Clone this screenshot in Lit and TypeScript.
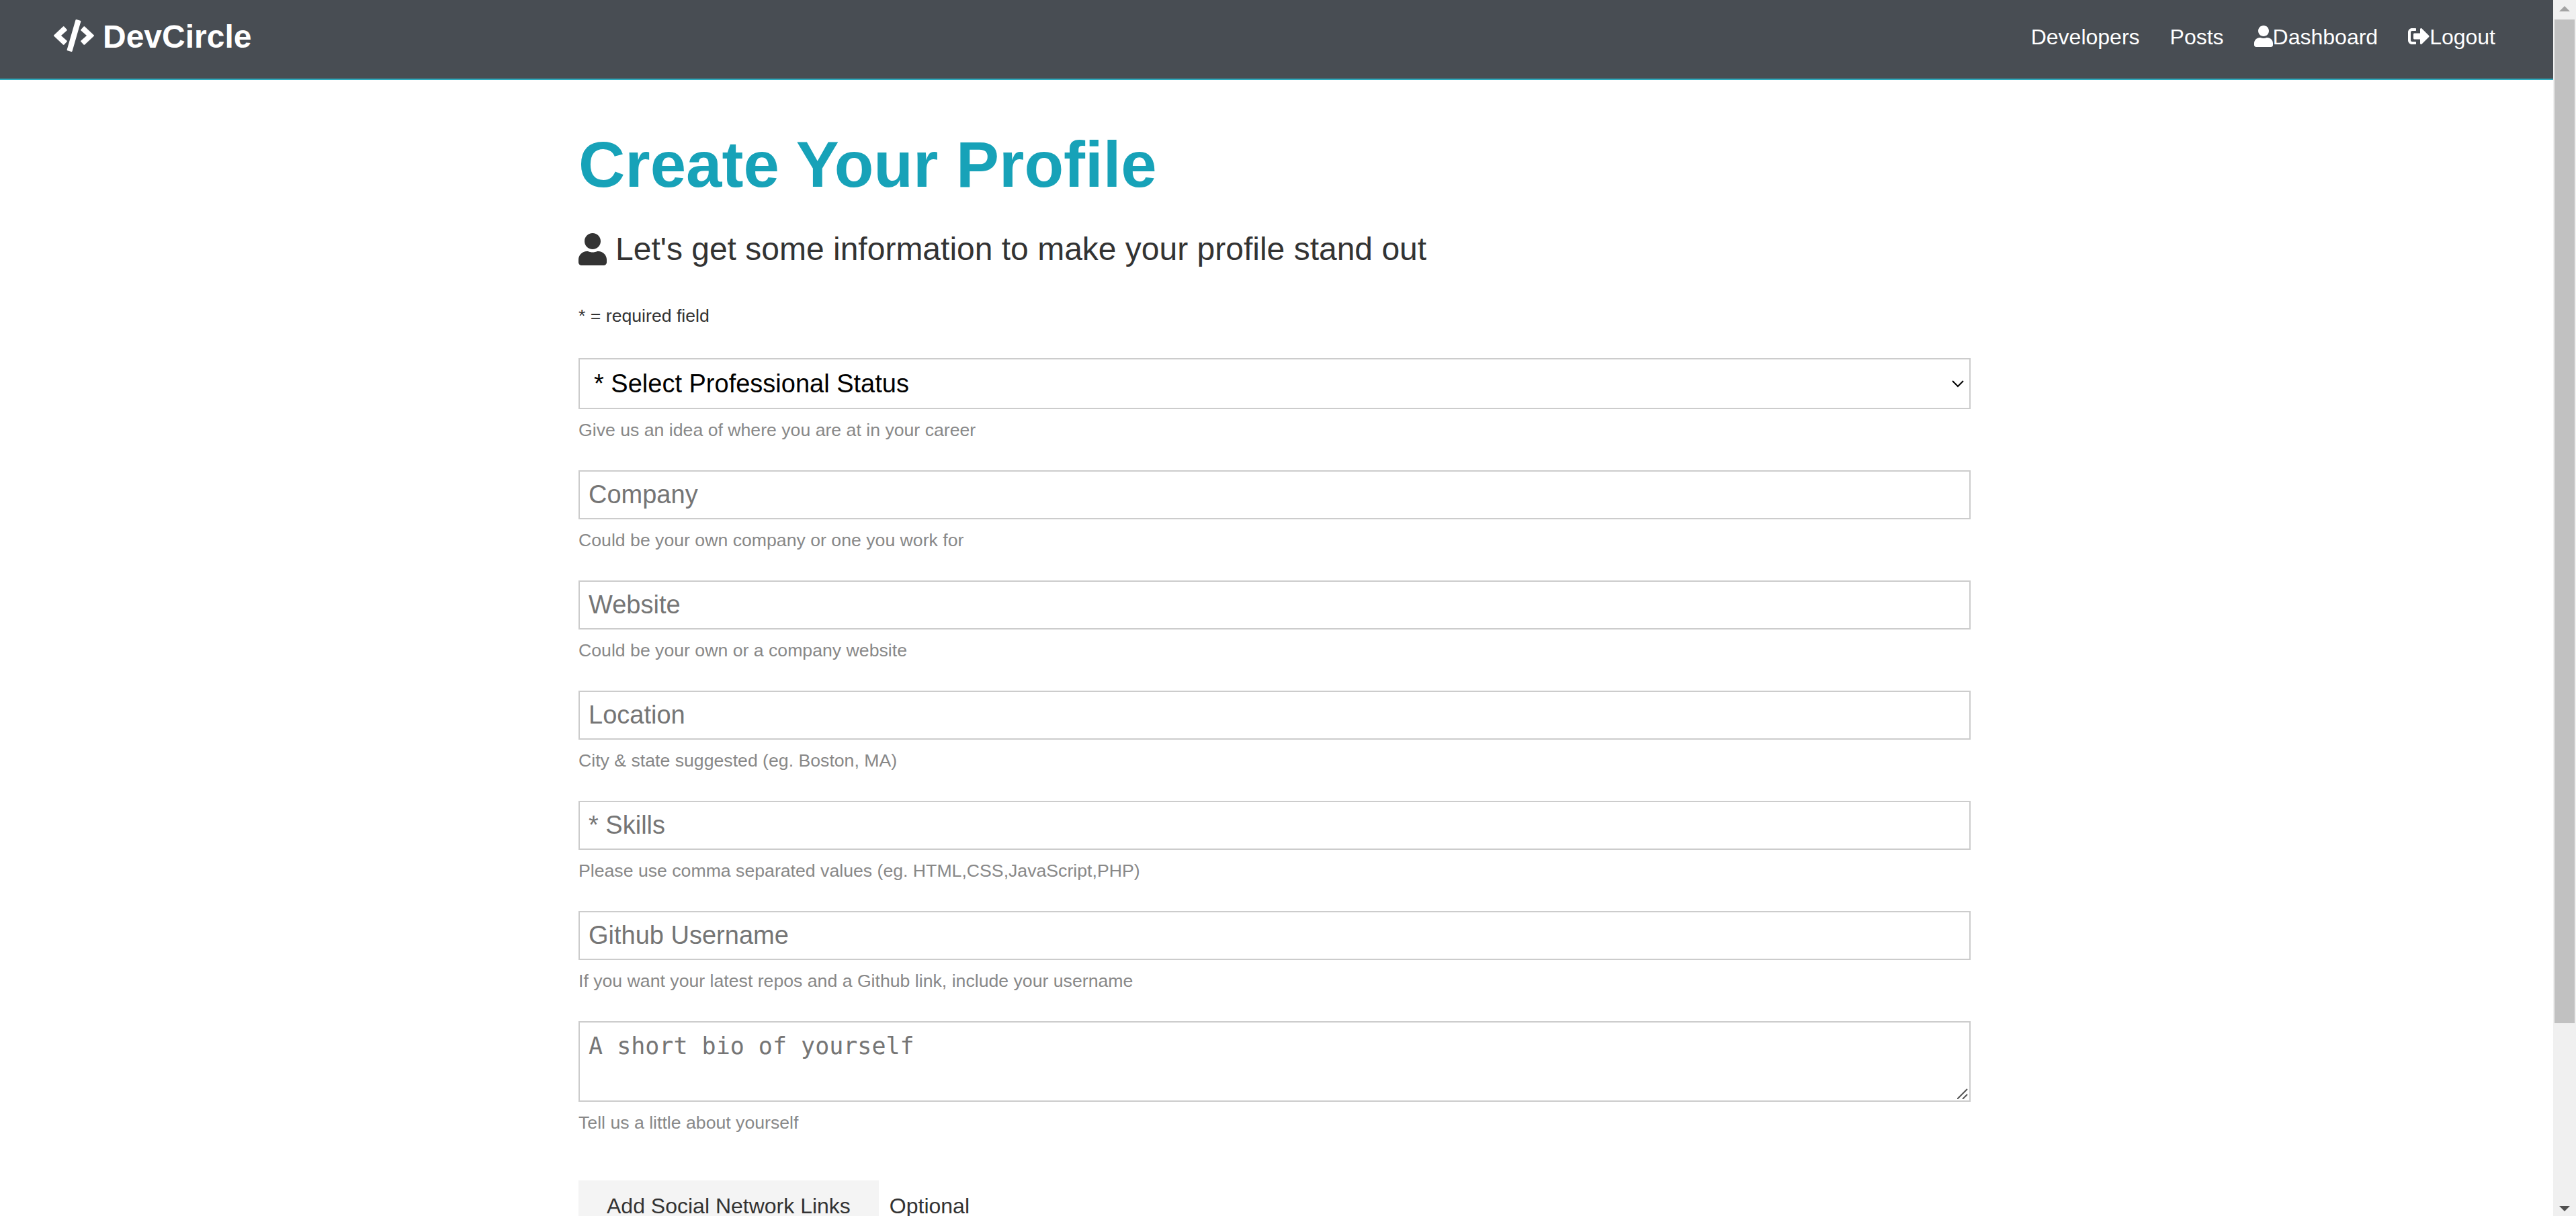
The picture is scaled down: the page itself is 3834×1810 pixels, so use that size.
import { LitElement, html, css, svg } from "lit";
import { customElement } from "lit/decorators.js";

interface Field {
  id: string;
  placeholder: string;
  hint: string;
}

const FIELDS: Field[] = [
  { id: "company", placeholder: "Company", hint: "Could be your own company or one you work for" },
  { id: "website", placeholder: "Website", hint: "Could be your own or a company website" },
  { id: "location", placeholder: "Location", hint: "City & state suggested (eg. Boston, MA)" },
  { id: "skills", placeholder: "* Skills", hint: "Please use comma separated values (eg. HTML,CSS,JavaScript,PHP)" },
  {
    id: "github",
    placeholder: "Github Username",
    hint: "If you want your latest repos and a Github link, include your username",
  },
];

const userPath = svg`<path d="M224 256c70.7 0 128-57.3 128-128S294.7 0 224 0 96 57.3 96 128s57.3 128 128 128zm89.6 32h-16.7c-22.2 10.2-46.9 16-72.9 16s-50.6-5.8-72.9-16h-16.7C60.2 288 0 348.2 0 422.4V464c0 26.5 21.5 48 48 48h352c26.5 0 48-21.5 48-48v-41.6c0-74.2-60.2-134.4-134.4-134.4z"/>`;

@customElement("dev-navbar")
export class DevNavbar extends LitElement {
  static styles = css`
    :host {
      display: block;
    }
    .bar {
      display: flex;
      justify-content: space-between;
      align-items: flex-start;
      box-sizing: border-box;
      height: 119px;
      padding: 16px 72px 0 80px;
      background: #484d53;
      border-bottom: 2px solid #2eabbf;
    }
    a {
      color: #fff;
      text-decoration: none;
    }
    .brand {
      margin: 0;
      font-size: 48px;
      line-height: 77px;
      font-weight: bold;
    }
    .brand a {
      display: flex;
      align-items: center;
      gap: 13px;
    }
    .links {
      display: flex;
      gap: 17px;
      margin: 0;
      padding: 14px 0 0;
      list-style: none;
      font-size: 32px;
      line-height: 51px;
    }
    .links a {
      display: flex;
      align-items: center;
      padding: 0 14px;
    }
    svg {
      display: block;
      margin-bottom: 3px;
      fill: #fff;
    }
    .code {
      width: 60px;
      height: 48px;
    }
    .user {
      width: 28px;
      height: 32px;
    }
    .out {
      width: 32px;
      height: 32px;
    }
  `;

  render() {
    return html`
      <nav class="bar">
        <h1 class="brand">
          <a href="#home">
            <svg class="code" viewBox="0 0 640 512" aria-hidden="true">
              <path
                d="M278.9 511.5l-61-17.7c-6.4-1.8-10-8.500-8.200-14.900L346.200 8.700c1.800-6.400 8.500-10 14.900-8.200l61 17.700c6.400 1.800 10 8.500 8.200 14.900L293.800 503.300c-1.900 6.400-8.500 10.100-14.900 8.200zm-114-112.200l43.500-46.400c4.600-4.900 4.300-12.700-.8-17.200L117 256l90.600-79.700c5.100-4.500 5.500-12.300.8-17.200l-43.500-46.400c-4.500-4.800-12.100-5.100-17-.5L3.800 247.200c-5.100 4.700-5.100 12.800 0 17.500l144.100 135.100c4.900 4.600 12.500 4.400 17-.5zm327.200.6l144.100-135.100c5.100-4.700 5.100-12.800 0-17.500L492.100 112.100c-4.800-4.500-12.400-4.300-17 .5L431.600 159c-4.600 4.900-4.300 12.700.8 17.200L523 256l-90.600 79.700c-5.100 4.500-5.500 12.300-.8 17.200l43.500 46.400c4.500 4.900 12.100 5.100 17 .6z"
              />
            </svg>
            <span>DevCircle</span>
          </a>
        </h1>
        <ul class="links">
          <li><a href="#developers">Developers</a></li>
          <li><a href="#posts">Posts</a></li>
          <li>
            <a href="#dashboard"
              ><svg class="user" viewBox="0 0 448 512" aria-hidden="true">${userPath}</svg
              ><span>Dashboard</span></a
            >
          </li>
          <li>
            <a href="#logout"
              ><svg class="out" viewBox="0 0 512 512" aria-hidden="true">
                <path
                  d="M497 273L329 441c-15 15-41 4.5-41-17v-96H152c-13.3 0-24-10.7-24-24v-96c0-13.3 10.7-24 24-24h136V88c0-21.4 25.9-32 41-17l168 168c9.3 9.4 9.3 24.6 0 34zM192 436v-40c0-6.6-5.4-12-12-12H96c-17.7 0-32-14.3-32-32V160c0-17.7 14.3-32 32-32h84c6.6 0 12-5.4 12-12V76c0-6.600-5.400-12-12-12H96c-53 0-96 43-96 96v192c0 53 43 96 96 96h84c6.600 0 12-5.400 12-12z"
                /></svg
              ><span>Logout</span></a
            >
          </li>
        </ul>
      </nav>
    `;
  }
}

@customElement("profile-form")
export class ProfileForm extends LitElement {
  static styles = css`
    :host {
      display: block;
      box-sizing: border-box;
      max-width: 2200px;
      margin: 0 auto;
      padding: 68px 64px;
      font-size: 32px;
    }
    .title {
      margin: 0 0 30px;
      font-size: 96px;
      line-height: 115px;
      font-weight: bold;
      color: #17a2b8;
    }
    .lead {
      display: flex;
      align-items: center;
      gap: 13px;
      margin: 0 0 36px;
      font-size: 48px;
      line-height: 77px;
    }
    .lead svg {
      width: 42px;
      height: 48px;
      fill: #333;
    }
    .required {
      margin: 0 0 37px;
      font-size: smaller;
      line-height: 51px;
    }
    .form {
      display: flex;
      flex-direction: column;
      gap: 38px;
    }
    .group {
      display: flex;
      flex-direction: column;
      gap: 10px;
    }
    .control {
      display: block;
      box-sizing: border-box;
      width: 100%;
      height: 73px;
      margin: 0;
      padding: 13px;
      border: 2px solid #ccc;
      border-radius: 0;
      background: #fff;
      color: #000;
      font-family: "Liberation Sans", Arial, sans-serif;
      font-size: 38px;
    }
    .control::placeholder {
      color: #757575;
      opacity: 1;
    }
    .select-wrap {
      display: grid;
      align-items: center;
    }
    .select-wrap > * {
      grid-area: 1 / 1;
    }
    select.control {
      height: 76px;
      padding: 0 60px 0 21px;
      appearance: none;
    }
    .chevron {
      justify-self: end;
      width: 18px;
      height: 11px;
      margin-right: 10px;
      fill: none;
      stroke: #000;
      stroke-width: 2;
      pointer-events: none;
    }
    textarea.control {
      height: 120px;
      font-family: "DejaVu Sans Mono", monospace;
      font-size: 35px;
      line-height: 45px;
      resize: none;
    }
    .grip {
      align-self: end;
      justify-self: end;
      width: 16px;
      height: 16px;
      margin: 0 4px 4px 0;
      fill: none;
      stroke: #555;
      stroke-width: 2;
      pointer-events: none;
    }
    .hint {
      font-size: smaller;
      line-height: 43px;
      color: #888;
    }
    .social {
      display: flex;
      align-items: center;
      gap: 16px;
      padding-top: 26px;
      line-height: 51px;
    }
    .btn {
      margin: 0;
      padding: 13px 42px;
      border: 0;
      background: #f4f4f4;
      color: #333;
      font: inherit;
    }
  `;

  render() {
    return html`
      <h1 class="title">Create Your Profile</h1>
      <p class="lead">
        <svg viewBox="0 0 448 512" aria-hidden="true">${userPath}</svg>
        <span>Let's get some information to make your profile stand out</span>
      </p>
      <p class="required">* = required field</p>
      <form class="form">
        <div class="group">
          <div class="select-wrap">
            <select class="control" id="status" aria-labelledby="status-hint">
              <option>* Select Professional Status</option>
            </select>
            <svg class="chevron" viewBox="0 0 18 11" aria-hidden="true"><path d="M1 1l8 8 8-8" /></svg>
          </div>
          <label class="hint" id="status-hint" for="status">Give us an idea of where you are at in your career</label>
        </div>
        ${FIELDS.map(
          (f) => html`
            <div class="group">
              <input class="control" type="text" id=${f.id} placeholder=${f.placeholder} />
              <label class="hint" for=${f.id}>${f.hint}</label>
            </div>
          `
        )}
        <div class="group">
          <div class="select-wrap">
            <textarea class="control" id="bio" rows="2" placeholder="A short bio of yourself"></textarea>
            <svg class="grip" viewBox="0 0 16 16" aria-hidden="true"><path d="M0 16L15 1M8 16l7-7" /></svg>
          </div>
          <label class="hint" for="bio">Tell us a little about yourself</label>
        </div>
        <div class="social">
          <button class="btn" type="button">Add Social Network Links</button>
          <span>Optional</span>
        </div>
      </form>
    `;
  }
}

@customElement("app-root")
export class AppRoot extends LitElement {
  static styles = css`
    :host {
      display: grid;
      grid-template-columns: minmax(0, 1fr) 34px;
      height: 100vh;
      overflow: hidden;
      background: #fff;
      color: #333;
      font-family: "Liberation Sans", Arial, sans-serif;
    }
    .page {
      min-height: 0;
      overflow: hidden;
    }
    .content {
      padding-right: 6px;
    }
    .scrollbar {
      display: flex;
      flex-direction: column;
      align-items: center;
      box-sizing: border-box;
      min-height: 0;
      padding: 9px 2px 7px;
      background: #f0f0f0;
    }
    .arrow {
      flex: none;
      width: 16px;
      height: 8px;
    }
    .up {
      fill: #a3a3a3;
    }
    .down {
      fill: #505050;
    }
    .track {
      flex: 1;
      display: grid;
      grid-template-rows: 23fr 4fr;
      align-self: stretch;
      min-height: 0;
      padding: 12px 0;
    }
    .thumb {
      background: #c1c1c1;
    }
  `;

  render() {
    return html`
      <div class="page">
        <dev-navbar></dev-navbar>
        <main class="content"><profile-form></profile-form></main>
      </div>
      <div class="scrollbar" aria-hidden="true">
        <svg class="arrow up" viewBox="0 0 16 8"><path d="M0 8l8-8 8 8z" /></svg>
        <div class="track"><div class="thumb"></div></div>
        <svg class="arrow down" viewBox="0 0 16 8"><path d="M0 0l8 8 8-8z" /></svg>
      </div>
    `;
  }
}
